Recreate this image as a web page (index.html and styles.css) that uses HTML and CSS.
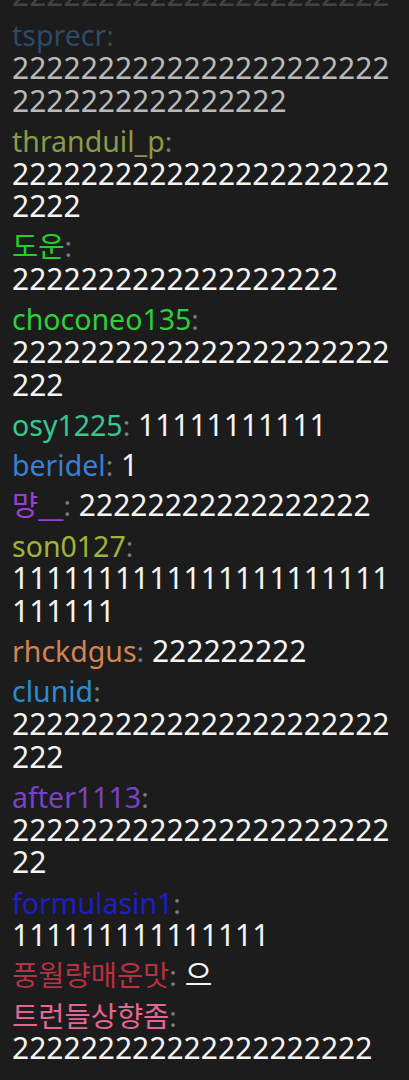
FILE: index.html
```html
<!DOCTYPE html>
<html lang="ko">
<head>
<meta charset="utf-8">
<title>Chat</title>
<link rel="stylesheet" href="styles.css">
</head>
<body>
<div class="chat">
  <div class="msg ghost"><span class="text">2222222222222222222222</span></div>
  <div class="msg faded"><span class="name c-tsprecr">tsprecr</span><span class="colon">:</span> <span class="text">22222222222222222222222222222222222222</span></div>
  <div class="msg"><span class="name c-thranduil">thranduil_p</span><span class="colon">:</span> <span class="text">22222222222222222222222222</span></div>
  <div class="msg"><span class="name c-doun">도운</span><span class="colon">:</span> <span class="text">2222222222222222222</span></div>
  <div class="msg"><span class="name c-choco">choconeo135</span><span class="colon">:</span> <span class="text">2222222222222222222222222</span></div>
  <div class="msg"><span class="name c-osy">osy1225</span><span class="colon">:</span> <span class="text">11111111111</span></div>
  <div class="msg"><span class="name c-beridel">beridel</span><span class="colon">:</span> <span class="text">1</span></div>
  <div class="msg"><span class="name c-myang">먕__</span><span class="colon">:</span> <span class="text">22222222222222222</span></div>
  <div class="msg"><span class="name c-son">son0127</span><span class="colon">:</span> <span class="text">1111111111111111111111111111</span></div>
  <div class="msg"><span class="name c-rhck">rhckdgus</span><span class="colon">:</span> <span class="text">222222222</span></div>
  <div class="msg"><span class="name c-clunid">clunid</span><span class="colon">:</span> <span class="text">2222222222222222222222222</span></div>
  <div class="msg"><span class="name c-after">after1113</span><span class="colon">:</span> <span class="text">222222222222222222222222</span></div>
  <div class="msg"><span class="name c-formula">formulasin1</span><span class="colon">:</span> <span class="text">111111111111111</span></div>
  <div class="msg"><span class="name c-pung">풍월량매운맛</span><span class="colon">:</span> <span class="text">으</span></div>
  <div class="msg"><span class="name c-trun">트런들상향좀</span><span class="colon">:</span> <span class="text">222222222222222222222</span></div>
</div>
</body>
</html>
```
FILE: styles.css
```css
html, body {
  margin: 0;
  padding: 0;
  background: #1b1c1b;
  height: 100%;
  overflow: hidden;
}
.chat {
  padding: 0 12px 0 12px;
  margin-top: -21px;
  display: flex;
  flex-direction: column;
  gap: 7.5px;
  font-family: "Noto Sans", "Noto Sans CJK KR", sans-serif;
  color: #f2f2f2;
  font-size: 30px;
  line-height: 32.7px;
}
.msg {
  overflow-wrap: anywhere;
}
.name {
  font-size: 28.5px;
}
.colon {
  font-size: 28px;
  color: #7e7e7e;
}
.text {
  color: #f4f4f4;
}
.ghost { opacity: 0.3; }
.ghost .text { color: #9aa0a8; }
.faded .text { color: #b9b9b9; }
.faded .colon { color: #444; }
.c-tsprecr { color: #2d4a66; }
.c-thranduil { color: #8a9a48; }
.c-doun { color: #22d02a; }
.c-choco { color: #2fcf3c; }
.c-osy { color: #35c990; }
.c-beridel { color: #3a7fd6; }
.c-myang { color: #9a3fd4; }
.c-son { color: #9db53c; }
.c-rhck { color: #d38452; }
.c-clunid { color: #2a8bd2; }
.c-after { color: #7a42c6; }
.c-formula { color: #1f1fc8; }
.c-pung { color: #b83044; }
.c-trun { color: #e46494; }
```
